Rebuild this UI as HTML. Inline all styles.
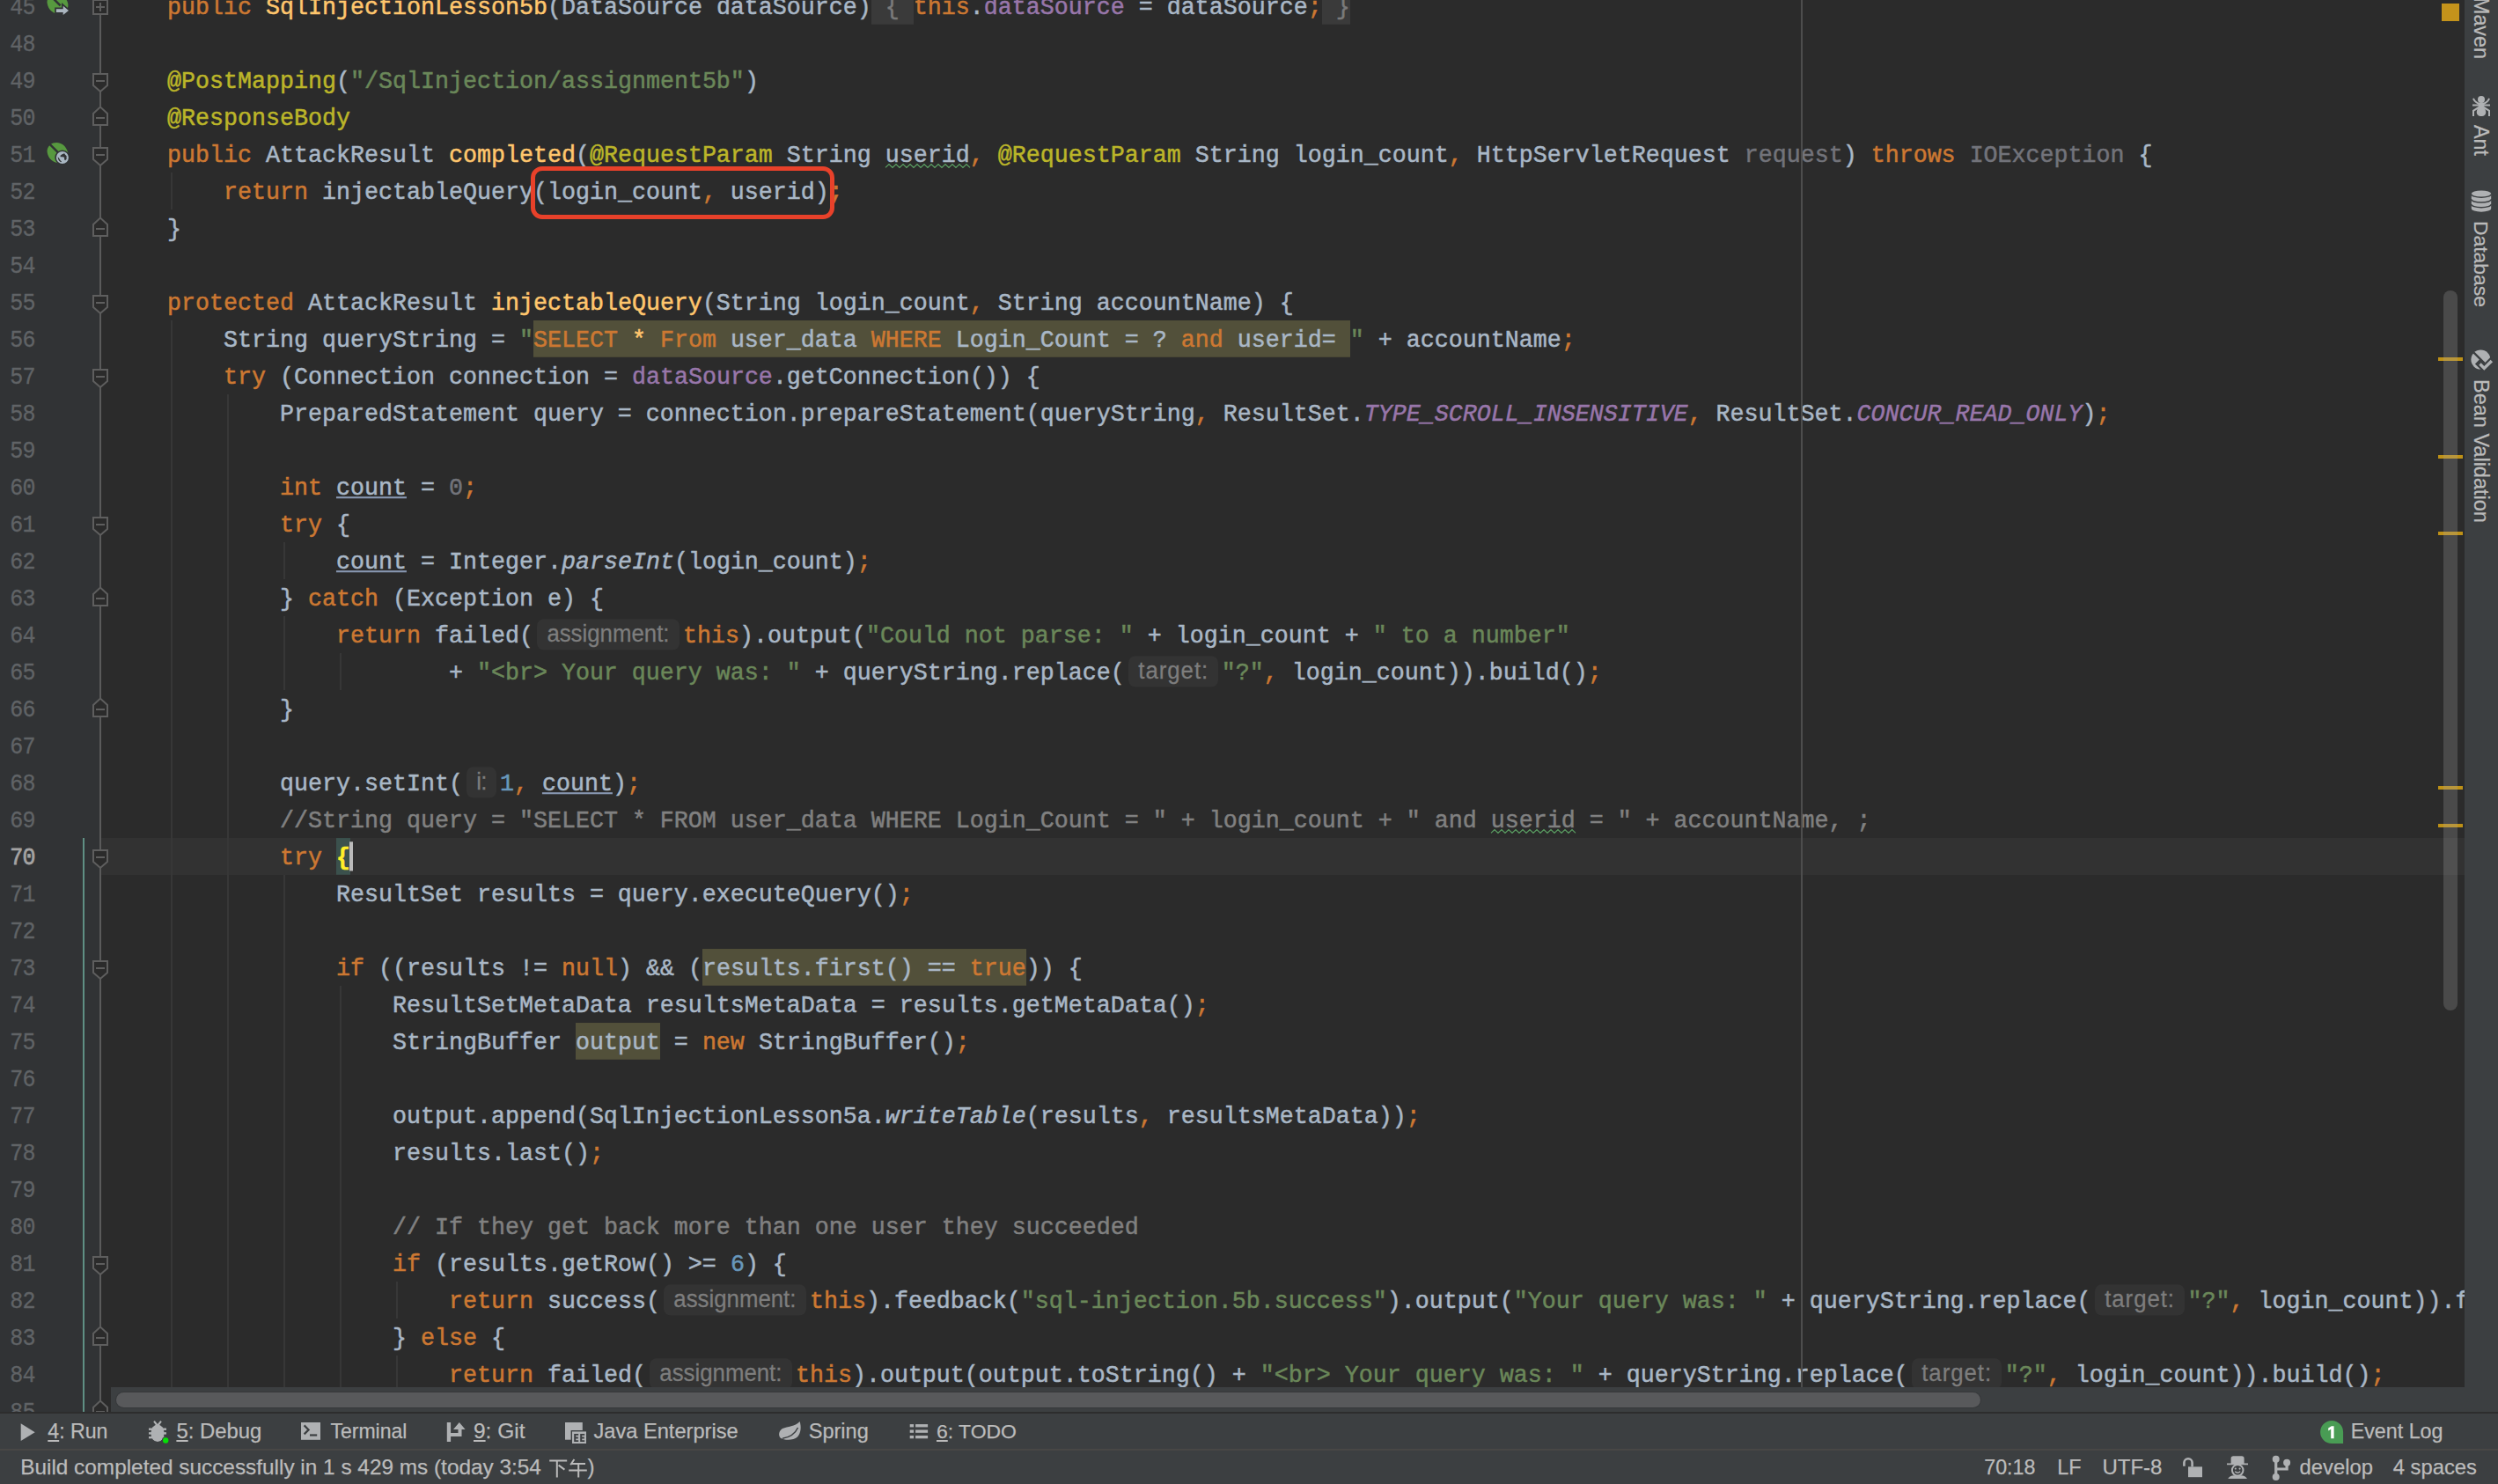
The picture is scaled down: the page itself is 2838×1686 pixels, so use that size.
<!DOCTYPE html>
<html><head><meta charset="utf-8"><title>SqlInjectionLesson5b.java</title>
<style>
*{margin:0;padding:0;box-sizing:border-box}
html,body{width:2838px;height:1686px;overflow:hidden;background:#2b2b2b}
body{position:relative;font-family:"Liberation Sans",sans-serif;color:#bbbbbb;-webkit-text-stroke:0.25px currentColor}
#ed{position:absolute;left:0;top:0;width:2800px;height:1604px;overflow:hidden;background:#2b2b2b}
#gut{position:absolute;left:0;top:0;width:113px;height:1604px;background:#313335}
.ln{position:absolute;left:0;width:40px;height:42px;line-height:42px;text-align:right;font-family:"Liberation Mono",monospace;font-size:25px;letter-spacing:-0.6px;padding-right:0;transform:scaleY(1.08);transform-origin:0 28px;color:#606366;white-space:pre}
.ln{-webkit-text-stroke:0.3px currentColor}.ln.cur{color:#a4a3a3;-webkit-text-stroke:0.7px currentColor}
.cl{position:absolute;left:126px;height:42px;line-height:42px;transform:scaleY(1.07);transform-origin:0 28px;-webkit-text-stroke:0.5px currentColor;font-family:"Liberation Mono",monospace;font-size:26.66px;color:#a9b7c6;white-space:pre}
.k{color:#cc7832}.s{color:#6a8759}.a{color:#bbb529}.m{color:#ffc66d}.f{color:#9876aa}
.c{color:#9876aa;font-style:italic}.n{color:#6897bb}.cm{color:#808080}.g{color:#72737a}.i{font-style:italic}
.u{text-decoration:underline;text-decoration-thickness:2px;text-underline-offset:1.5px;text-decoration-color:#8796b0}
.w{background:#52503a;display:inline-block;height:39.25px;vertical-align:top;margin-top:-0.04px}
.fold{background:#3a3a3a;color:#7a7a7a;display:inline-block;height:39.25px;vertical-align:top;margin-top:-0.04px}
.typo{}
.brace{color:#ffef28;background:#3b514d;font-weight:bold;display:inline-block;height:39.25px;vertical-align:top;margin-top:-0.04px}
.caret{display:inline-block;width:4px;height:31.78px;margin-top:3.70px;margin-left:-1px;margin-right:-3px;background:#bbbbbb;vertical-align:top}
.hint{display:inline-block;height:42px;vertical-align:top;position:relative;margin-top:0;-webkit-text-stroke:0.25px currentColor}
.hb{position:absolute;left:4px;right:4px;top:3.40px;height:32.4px;border-radius:8px/7.5px;background:#333333;color:#7d7d7d;font-family:"Liberation Sans",sans-serif;font-size:25.8px;line-height:31.28px;text-align:center;letter-spacing:0}
.guide{position:absolute;width:2px;background:#373737}
</style></head><body>
<div id="ed">
<div style="position:absolute;left:115px;top:952px;width:2685px;height:42px;background:#323232"></div>
<div class="guide" style="left:194px;top:196px;height:42px"></div>
<div class="guide" style="left:194px;top:364px;height:1302px"></div>
<div class="guide" style="left:258px;top:448px;height:1218px"></div>
<div class="guide" style="left:322px;top:616px;height:42px"></div>
<div class="guide" style="left:322px;top:700px;height:84px"></div>
<div class="guide" style="left:322px;top:994px;height:672px"></div>
<div class="guide" style="left:386px;top:742px;height:42px"></div>
<div class="guide" style="left:386px;top:1120px;height:546px"></div>
<div class="guide" style="left:450px;top:1456px;height:42px"></div>
<div class="guide" style="left:450px;top:1540px;height:42px"></div>
<div class="cl" style="top:-12px">    <span class="k">public </span><span class="m">SqlInjectionLesson5b</span>(DataSource dataSource)<span class="fold"> { </span><span class="k">this</span>.<span class="f">dataSource</span> = dataSource<span class="k">;</span><span class="fold"> }</span></div>
<div class="cl" style="top:72px">    <span class="a">@PostMapping</span>(<span class="s">"/SqlInjection/assignment5b"</span>)</div>
<div class="cl" style="top:114px">    <span class="a">@ResponseBody</span></div>
<div class="cl" style="top:156px">    <span class="k">public </span>AttackResult <span class="m">completed</span>(<span class="a">@RequestParam</span> String <span class="typo">userid</span><span class="k">,</span> <span class="a">@RequestParam</span> String login_count<span class="k">,</span> HttpServletRequest <span class="g">request</span>) <span class="k">throws </span><span class="g">IOException</span> {</div>
<div class="cl" style="top:198px">        <span class="k">return </span>injectableQuery(login_count<span class="k">,</span> userid)<span class="k">;</span></div>
<div class="cl" style="top:240px">    }</div>
<div class="cl" style="top:324px">    <span class="k">protected </span>AttackResult <span class="m">injectableQuery</span>(String login_count<span class="k">,</span> String accountName) {</div>
<div class="cl" style="top:366px">        String queryString = <span class="s">"</span><span class="w"><span class="k">SELECT </span><span class="m">*</span><span class="k"> From </span>user_data <span class="k">WHERE </span>Login_Count = ? <span class="k">and </span>userid= </span><span class="s">"</span> + accountName<span class="k">;</span></div>
<div class="cl" style="top:408px">        <span class="k">try </span>(Connection connection = <span class="f">dataSource</span>.getConnection()) {</div>
<div class="cl" style="top:450px">            PreparedStatement query = connection.prepareStatement(queryString<span class="k">,</span> ResultSet.<span class="c">TYPE_SCROLL_INSENSITIVE</span><span class="k">,</span> ResultSet.<span class="c">CONCUR_READ_ONLY</span>)<span class="k">;</span></div>
<div class="cl" style="top:534px">            <span class="k">int </span><span class="u">count</span> = <span class="g">0</span><span class="k">;</span></div>
<div class="cl" style="top:576px">            <span class="k">try </span>{</div>
<div class="cl" style="top:618px">                <span class="u">count</span> = Integer.<span class="i">parseInt</span>(login_count)<span class="k">;</span></div>
<div class="cl" style="top:660px">            } <span class="k">catch </span>(Exception e) {</div>
<div class="cl" style="top:702px">                <span class="k">return </span>failed(<span class="hint" style="width:170px"><span class="hb" style="">assignment:</span></span><span class="k">this</span>).output(<span class="s">"Could not parse: "</span> + login_count + <span class="s">" to a number"</span></div>
<div class="cl" style="top:744px">                        + <span class="s">"&lt;br&gt; Your query was: "</span> + queryString.replace(<span class="hint" style="width:110px"><span class="hb" style="letter-spacing:0.95px;padding-left:1px;">target:</span></span><span class="s">"?"</span><span class="k">,</span> login_count)).build()<span class="k">;</span></div>
<div class="cl" style="top:786px">            }</div>
<div class="cl" style="top:870px">            query.setInt(<span class="hint" style="width:42px"><span class="hb" style="letter-spacing:-0.8px;">i:</span></span><span class="n">1</span><span class="k">,</span> <span class="u">count</span>)<span class="k">;</span></div>
<div class="cl" style="top:912px">            <span class="cm">//String query = "SELECT * FROM user_data WHERE Login_Count = " + login_count + " and </span><span class="cm typo">userid</span><span class="cm"> = " + accountName, ;</span></div>
<div class="cl" style="top:954px">            <span class="k">try </span><span class="brace">{</span><span class="caret"></span></div>
<div class="cl" style="top:996px">                ResultSet results = query.executeQuery()<span class="k">;</span></div>
<div class="cl" style="top:1080px">                <span class="k">if </span>((results != <span class="k">null</span>) &amp;&amp; (<span class="w">results.first() == <span class="k">true</span></span>)) {</div>
<div class="cl" style="top:1122px">                    ResultSetMetaData resultsMetaData = results.getMetaData()<span class="k">;</span></div>
<div class="cl" style="top:1164px">                    StringBuffer <span class="w">output</span> = <span class="k">new </span>StringBuffer()<span class="k">;</span></div>
<div class="cl" style="top:1248px">                    output.append(SqlInjectionLesson5a.<span class="i">writeTable</span>(results<span class="k">,</span> resultsMetaData))<span class="k">;</span></div>
<div class="cl" style="top:1290px">                    results.last()<span class="k">;</span></div>
<div class="cl" style="top:1374px">                    <span class="cm">// If they get back more than one user they succeeded</span></div>
<div class="cl" style="top:1416px">                    <span class="k">if </span>(results.getRow() &gt;= <span class="n">6</span>) {</div>
<div class="cl" style="top:1458px">                        <span class="k">return </span>success(<span class="hint" style="width:170px"><span class="hb" style="">assignment:</span></span><span class="k">this</span>).feedback(<span class="s">"sql-injection.5b.success"</span>).output(<span class="s">"Your query was: "</span> + queryString.replace(<span class="hint" style="width:110px"><span class="hb" style="letter-spacing:0.95px;padding-left:1px;">target:</span></span><span class="s">"?"</span><span class="k">,</span> login_count)).feedback(</div>
<div class="cl" style="top:1500px">                    } <span class="k">else </span>{</div>
<div class="cl" style="top:1542px">                        <span class="k">return </span>failed(<span class="hint" style="width:170px"><span class="hb" style="">assignment:</span></span><span class="k">this</span>).output(output.toString() + <span class="s">"&lt;br&gt; Your query was: "</span> + queryString.replace(<span class="hint" style="width:110px"><span class="hb" style="letter-spacing:0.95px;padding-left:1px;">target:</span></span><span class="s">"?"</span><span class="k">,</span> login_count)).build()<span class="k">;</span></div>
<div style="position:absolute;left:2046px;top:0;width:2px;height:1604px;background:#4d4d4d"></div>
<svg style="position:absolute;left:0;top:0" width="2800" height="1604" viewBox="0 0 2800 1604"><polyline points="1006,190.4 1010,186.6 1014,190.4 1018,186.6 1022,190.4 1026,186.6 1030,190.4 1034,186.6 1038,190.4 1042,186.6 1046,190.4 1050,186.6 1054,190.4 1058,186.6 1062,190.4 1066,186.6 1070,190.4 1074,186.6 1078,190.4 1082,186.6 1086,190.4 1090,186.6 1094,190.4 1098,186.6 1102,190.4" fill="none" stroke="#5b9f63" stroke-width="1.25"/><polyline points="1694,946.4 1698,942.6 1702,946.4 1706,942.6 1710,946.4 1714,942.6 1718,946.4 1722,942.6 1726,946.4 1730,942.6 1734,946.4 1738,942.6 1742,946.4 1746,942.6 1750,946.4 1754,942.6 1758,946.4 1762,942.6 1766,946.4 1770,942.6 1774,946.4 1778,942.6 1782,946.4 1786,942.6 1790,946.4" fill="none" stroke="#5b9f63" stroke-width="1.25"/></svg>
<div style="position:absolute;left:603px;top:189px;width:345px;height:60px;border:5px solid #e8412a;border-radius:13px"></div>
<div id="gut"></div>
<div class="ln" style="top:-11px">45</div>
<div class="ln" style="top:31px">48</div>
<div class="ln" style="top:73px">49</div>
<div class="ln" style="top:115px">50</div>
<div class="ln" style="top:157px">51</div>
<div class="ln" style="top:199px">52</div>
<div class="ln" style="top:241px">53</div>
<div class="ln" style="top:283px">54</div>
<div class="ln" style="top:325px">55</div>
<div class="ln" style="top:367px">56</div>
<div class="ln" style="top:409px">57</div>
<div class="ln" style="top:451px">58</div>
<div class="ln" style="top:493px">59</div>
<div class="ln" style="top:535px">60</div>
<div class="ln" style="top:577px">61</div>
<div class="ln" style="top:619px">62</div>
<div class="ln" style="top:661px">63</div>
<div class="ln" style="top:703px">64</div>
<div class="ln" style="top:745px">65</div>
<div class="ln" style="top:787px">66</div>
<div class="ln" style="top:829px">67</div>
<div class="ln" style="top:871px">68</div>
<div class="ln" style="top:913px">69</div>
<div class="ln cur" style="top:955px">70</div>
<div class="ln" style="top:997px">71</div>
<div class="ln" style="top:1039px">72</div>
<div class="ln" style="top:1081px">73</div>
<div class="ln" style="top:1123px">74</div>
<div class="ln" style="top:1165px">75</div>
<div class="ln" style="top:1207px">76</div>
<div class="ln" style="top:1249px">77</div>
<div class="ln" style="top:1291px">78</div>
<div class="ln" style="top:1333px">79</div>
<div class="ln" style="top:1375px">80</div>
<div class="ln" style="top:1417px">81</div>
<div class="ln" style="top:1459px">82</div>
<div class="ln" style="top:1501px">83</div>
<div class="ln" style="top:1543px">84</div>
<div class="ln" style="top:1585px">85</div>
<svg style="position:absolute;left:0;top:0" width="130" height="1604" viewBox="0 0 130 1604"><rect x="94" y="952" width="2" height="652" fill="#5f8f83"/><rect x="113" y="0" width="2" height="1604" fill="#5a5a5a"/><rect x="106" y="0" width="16" height="16" fill="#2b2b2b" stroke="#5e5e5e" stroke-width="2"/><rect x="109" y="7" width="10" height="2" fill="#5e5e5e"/><rect x="113" y="3" width="2" height="10" fill="#5e5e5e"/><path d="M106 84 H122 V97 L114 104 L106 97 Z" fill="#2b2b2b" stroke="#5e5e5e" stroke-width="2"/><rect x="109" y="91" width="10" height="2" fill="#5e5e5e"/><path d="M106 168 H122 V181 L114 188 L106 181 Z" fill="#2b2b2b" stroke="#5e5e5e" stroke-width="2"/><rect x="109" y="175" width="10" height="2" fill="#5e5e5e"/><path d="M106 336 H122 V349 L114 356 L106 349 Z" fill="#2b2b2b" stroke="#5e5e5e" stroke-width="2"/><rect x="109" y="343" width="10" height="2" fill="#5e5e5e"/><path d="M106 420 H122 V433 L114 440 L106 433 Z" fill="#2b2b2b" stroke="#5e5e5e" stroke-width="2"/><rect x="109" y="427" width="10" height="2" fill="#5e5e5e"/><path d="M106 588 H122 V601 L114 608 L106 601 Z" fill="#2b2b2b" stroke="#5e5e5e" stroke-width="2"/><rect x="109" y="595" width="10" height="2" fill="#5e5e5e"/><path d="M106 966 H122 V979 L114 986 L106 979 Z" fill="#2b2b2b" stroke="#5e5e5e" stroke-width="2"/><rect x="109" y="973" width="10" height="2" fill="#5e5e5e"/><path d="M106 1092 H122 V1105 L114 1112 L106 1105 Z" fill="#2b2b2b" stroke="#5e5e5e" stroke-width="2"/><rect x="109" y="1099" width="10" height="2" fill="#5e5e5e"/><path d="M106 1428 H122 V1441 L114 1448 L106 1441 Z" fill="#2b2b2b" stroke="#5e5e5e" stroke-width="2"/><rect x="109" y="1435" width="10" height="2" fill="#5e5e5e"/><path d="M106 142 H122 V129 L114 121.5 L106 129 Z" fill="#2b2b2b" stroke="#5e5e5e" stroke-width="2"/><rect x="109" y="133" width="10" height="2" fill="#5e5e5e"/><path d="M106 268 H122 V255 L114 247.5 L106 255 Z" fill="#2b2b2b" stroke="#5e5e5e" stroke-width="2"/><rect x="109" y="259" width="10" height="2" fill="#5e5e5e"/><path d="M106 688 H122 V675 L114 667.5 L106 675 Z" fill="#2b2b2b" stroke="#5e5e5e" stroke-width="2"/><rect x="109" y="679" width="10" height="2" fill="#5e5e5e"/><path d="M106 814 H122 V801 L114 793.5 L106 801 Z" fill="#2b2b2b" stroke="#5e5e5e" stroke-width="2"/><rect x="109" y="805" width="10" height="2" fill="#5e5e5e"/><path d="M106 1528 H122 V1515 L114 1507.5 L106 1515 Z" fill="#2b2b2b" stroke="#5e5e5e" stroke-width="2"/><rect x="109" y="1519" width="10" height="2" fill="#5e5e5e"/><path d="M106 1612 H122 V1599 L114 1591.5 L106 1599 Z" fill="#2b2b2b" stroke="#5e5e5e" stroke-width="2"/><rect x="109" y="1603" width="10" height="2" fill="#5e5e5e"/><g transform="translate(65.6 4.4)"><path d="M-8.5 -9.5 C-2 -14 8 -12 11.5 -1 C13 5 9 10 4 12 C-4 12 -11 7 -12 -1 C-12.5 -4 -11 -7 -8.5 -9.5 Z" fill="#57993f"/><path d="M-9.5 -10.5 L3 2" stroke="#313335" stroke-width="2.6" fill="none"/><path d="M-3.4 4.2 H4.4 V-1.4 L14.9 7.6 L4.4 16.4 V14 H-3.4 Z" fill="#313335"/><path d="M-1.7 5.8 H6.1 V2.3 L12.4 7.6 L6.1 12.7 V9.6 H-1.7 Z" fill="#aab5bf"/></g><g transform="translate(65.6 173.8)"><path d="M-8.5 -9.5 C-2 -14 8 -12 11.5 -1 C13 5 9 10 4 12 C-4 12 -11 7 -12 -1 C-12.5 -4 -11 -7 -8.5 -9.5 Z" fill="#57993f"/><path d="M-9.5 -10.5 L3 2" stroke="#313335" stroke-width="2.6" fill="none"/><circle cx="5.3" cy="5.2" r="8.6" fill="#313335"/><circle cx="5.3" cy="5.2" r="7" fill="#a9b7c2"/><path d="M3 3 L5 1.5 L7.5 0.5 L8.5 2 L10 3.5 L10 7 L8.5 8.5 L7.5 7.5 L7.5 5 L5.5 4.5 L3 4.5 Z" fill="#313335"/><path d="M0 4.5 L1.5 6 L3 8.5 L4.5 10 L3.5 10.5 L1.5 9 L0.5 7 Z" fill="#313335"/></g></svg>
<div style="position:absolute;left:2774px;top:4px;width:20px;height:20px;background:#c4931b"></div>
<div style="position:absolute;left:2770px;top:406px;width:28px;height:4px;background:#be9117"></div>
<div style="position:absolute;left:2770px;top:517px;width:28px;height:4px;background:#be9117"></div>
<div style="position:absolute;left:2770px;top:604px;width:28px;height:4px;background:#be9117"></div>
<div style="position:absolute;left:2770px;top:893px;width:28px;height:4px;background:#be9117"></div>
<div style="position:absolute;left:2770px;top:936px;width:28px;height:4px;background:#be9117"></div>
<div style="position:absolute;left:2776px;top:330px;width:16px;height:818px;border-radius:8px;background:rgba(166,166,166,0.26)"></div>
<div style="position:absolute;left:126px;top:1576px;width:2674px;height:28px;background:#3c3f41"></div>
<div style="position:absolute;left:132px;top:1582px;width:2118px;height:17px;border-radius:9px;background:#58595b;box-shadow:0 0 0 1px #36383a"></div>
</div>
<div style="position:absolute;left:2800px;top:0;width:38px;height:1604px;background:#3c3f41"></div>
<div style="position:absolute;left:2804px;top:-3px;width:30px;height:70px;writing-mode:vertical-rl;font-size:23.3px;line-height:30px;color:#bbbbbb;white-space:pre;overflow:visible">Maven</div>
<div style="position:absolute;left:2804px;top:142px;width:30px;height:40px;writing-mode:vertical-rl;font-size:23.3px;line-height:30px;color:#bbbbbb;white-space:pre;overflow:visible">Ant</div>
<div style="position:absolute;left:2804px;top:251px;width:30px;height:100px;writing-mode:vertical-rl;font-size:22.9px;line-height:30px;color:#bbbbbb;white-space:pre;overflow:visible">Database</div>
<div style="position:absolute;left:2804px;top:431px;width:30px;height:170px;writing-mode:vertical-rl;font-size:23.5px;line-height:30px;color:#bbbbbb;white-space:pre;overflow:visible">Bean Validation</div>
<div style="position:absolute;left:0;top:1604px;width:2838px;height:44px;background:#3c3f41;border-top:2px solid #2d2d2d;border-bottom:2px solid #484745"></div>
<div style="position:absolute;left:0;top:1648px;width:2838px;height:38px;background:#3c3f41"></div>
<div style="position:absolute;left:54.3px;top:1606.0px;height:40px;line-height:40px;font-size:23.15px;color:#bbbbbb;white-space:pre"><span style="text-decoration:underline;text-decoration-thickness:2px;text-underline-offset:1.5px">4</span>: Run</div>
<div style="position:absolute;left:200.4px;top:1605.7px;height:40px;line-height:40px;font-size:23.88px;color:#bbbbbb;white-space:pre"><span style="text-decoration:underline;text-decoration-thickness:2px;text-underline-offset:1.5px">5</span>: Debug</div>
<div style="position:absolute;left:375.4px;top:1606.0px;height:40px;line-height:40px;font-size:23.05px;color:#bbbbbb;white-space:pre">Terminal</div>
<div style="position:absolute;left:538.0px;top:1605.5px;height:40px;line-height:40px;font-size:24.48px;color:#bbbbbb;white-space:pre"><span style="text-decoration:underline;text-decoration-thickness:2px;text-underline-offset:1.5px">9</span>: Git</div>
<div style="position:absolute;left:674.5px;top:1605.8px;height:40px;line-height:40px;font-size:23.63px;color:#bbbbbb;white-space:pre">Java Enterprise</div>
<div style="position:absolute;left:918.7px;top:1605.8px;height:40px;line-height:40px;font-size:23.56px;color:#bbbbbb;white-space:pre">Spring</div>
<div style="position:absolute;left:1064.0px;top:1606.0px;height:40px;line-height:40px;font-size:22.95px;color:#bbbbbb;white-space:pre"><span style="text-decoration:underline;text-decoration-thickness:2px;text-underline-offset:1.5px">6</span>: TODO</div>
<div style="position:absolute;left:2670.7px;top:1605.9px;height:40px;line-height:40px;font-size:23.27px;color:#bbbbbb;white-space:pre">Event Log</div>
<div style="position:absolute;left:23.2px;top:1646.9px;height:40px;line-height:40px;font-size:24.36px;color:#bbbbbb;white-space:pre">Build completed successfully in 1 s 429 ms (today 3:54</div>
<div style="position:absolute;left:667.4px;top:1646.9px;height:40px;line-height:40px;font-size:24.2px;color:#bbbbbb;white-space:pre">)</div>
<div style="position:absolute;left:2254.3px;top:1647.3px;height:40px;line-height:40px;font-size:23.22px;color:#bbbbbb;white-space:pre">70:18</div>
<div style="position:absolute;left:2337.2px;top:1647.2px;height:40px;line-height:40px;font-size:23.48px;color:#bbbbbb;white-space:pre">LF</div>
<div style="position:absolute;left:2388.4px;top:1647.0px;height:40px;line-height:40px;font-size:24.04px;color:#bbbbbb;white-space:pre">UTF-8</div>
<div style="position:absolute;left:2612.6px;top:1647.1px;height:40px;line-height:40px;font-size:23.78px;color:#bbbbbb;white-space:pre">develop</div>
<div style="position:absolute;left:2718.7px;top:1647.0px;height:40px;line-height:40px;font-size:23.81px;color:#bbbbbb;white-space:pre">4 spaces</div>
<svg style="position:absolute;left:0;top:0;pointer-events:none" width="2838" height="1686" viewBox="0 0 2838 1686"><path d="M23.7 1617.3 L39.7 1627.2 L23.7 1637.1 Z" fill="#afb1b3"/><g fill="#afb1b3" stroke="none"><ellipse cx="179" cy="1628.2" rx="7.6" ry="9.8"/><path d="M174.2 1615.3 l1.6 -1.2 l3.2 4 l3.2 -4 l1.6 1.2 l-3.4 4.6 h-2.8 Z"/><rect x="169" y="1622.5" width="20" height="2.4"/><rect x="169" y="1627.2" width="20" height="2.4"/><rect x="169" y="1632" width="20" height="2.4"/></g><circle cx="188.2" cy="1636.5" r="4.4" fill="#3c3f41"/><circle cx="188.2" cy="1636.5" r="3.2" fill="#05e005"/><rect x="342" y="1616" width="22" height="19.8" fill="#afb1b3"/><path d="M345.6 1619.4 L350.6 1624.4 L345.6 1629.4" fill="none" stroke="#3c3f41" stroke-width="2.2"/><rect x="352" y="1629.4" width="8.2" height="2.2" fill="#3c3f41"/><path d="M507.8 1616 h4.3 v12 h8.4 v-4 h-5.5 l6.8 -8 l6.8 8 h-4.1 v8 h-12.4 v6 h-4.3 Z" fill="#afb1b3"/><rect x="642" y="1616" width="19.8" height="19.7" fill="#afb1b3"/><rect x="648.6" y="1625" width="19" height="16.4" fill="#3c3f41"/><rect x="650" y="1626.4" width="16" height="13.6" fill="#afb1b3"/><path d="M652.2 1629 h5 v1.8 h-3 v1.8 h2.6 v1.8 h-2.6 v1.8 h3 v1.8 h-5 Z" fill="#3c3f41"/><path d="M659.2 1629 h5 v1.8 h-3 v1.8 h2.6 v1.8 h-2.6 v1.8 h3 v1.8 h-5 Z" fill="#3c3f41"/><path d="M908.6 1615 C910.5 1621 910 1628 906 1632.5 C901 1637 891 1636.5 886.5 1633.5 C884 1630 885 1625.5 889 1623 C895 1620.5 903 1621 908.6 1615 Z" fill="#afb1b3"/><path d="M889 1634.3 C897 1633 903.5 1628.5 906.5 1622" fill="none" stroke="#3c3f41" stroke-width="1.5"/><rect x="1033.7" y="1618.1" width="4.4" height="3.3" fill="#afb1b3"/><rect x="1040.1" y="1618.1" width="14" height="3.3" fill="#afb1b3"/><rect x="1033.7" y="1624.5" width="4.4" height="3.3" fill="#afb1b3"/><rect x="1040.1" y="1624.5" width="14" height="3.3" fill="#afb1b3"/><rect x="1033.7" y="1631" width="4.4" height="3.3" fill="#afb1b3"/><rect x="1040.1" y="1631" width="14" height="3.3" fill="#afb1b3"/><path d="M2649.1 1614 a13 13 0 0 1 13 13 v13 h-13 a13 13 0 0 1 0 -26 Z" fill="#499c54"/><path d="M2645.2 1622.6 l3.6 -2.4 h2.8 v14 h-3.4 v-10.4 l-3 1.6 Z" fill="#ffffff"/><rect x="2486" y="1666.4" width="16" height="11.8" fill="#afb1b3"/><path d="M2481.4 1665.8 v-4 a4.6 4.6 0 0 1 9.2 0 v4.6" fill="none" stroke="#afb1b3" stroke-width="2.6"/><g fill="#afb1b3"><path d="M2534.6 1662.4 v-5.4 q0 -2.8 2.8 -2.8 h9.4 q2.8 0 2.8 2.8 v5.4 h4.4 v1.8 h-24 v-1.8 Z"/><path d="M2531.2 1680 q2 -3.6 7 -3.8 h7.8 q5 0.2 7 3.8 Z"/></g><circle cx="2542.2" cy="1670.3" r="6.3" fill="none" stroke="#afb1b3" stroke-width="2"/><circle cx="2539.8" cy="1668.6" r="1.1" fill="#afb1b3"/><circle cx="2544.6" cy="1668.6" r="1.1" fill="#afb1b3"/><path d="M2539.2 1671.8 q3 2.8 6 0" fill="none" stroke="#afb1b3" stroke-width="1.4"/><g fill="#afb1b3"><circle cx="2585.7" cy="1657.8" r="4"/><circle cx="2598.1" cy="1661.8" r="4"/><circle cx="2585.7" cy="1678" r="4"/></g><path d="M2585.7 1657.8 V1678 M2598.1 1661.8 V1669 H2585.7" fill="none" stroke="#afb1b3" stroke-width="3.2"/><g fill="none" stroke="#bbbbbb" stroke-width="2"><path d="M624.2 1659.6 H644.2 M632.8 1659.6 V1678.6 M634.6 1664.6 L641.4 1669.6"/><path d="M652.4 1658 L648.2 1664.2 M649.8 1663 H665 M646.2 1670.4 H666.8 M657.2 1663 V1678.6"/></g><g fill="#afb1b3" stroke="none"><circle cx="2819" cy="112.9" r="4"/><circle cx="2819" cy="119.4" r="3.1"/><path d="M2819 121 C2822.5 121.5 2824.2 124.5 2824.2 127.5 C2824.2 130.3 2822 132.1 2819 132.1 C2816 132.1 2813.8 130.3 2813.8 127.5 C2813.8 124.5 2815.5 121.5 2819 121 Z"/></g><path d="M2817 117.8 Q2812.2 116.8 2809.9 111.9 M2821 117.8 Q2825.8 116.8 2828.1 111.9 M2809 119.5 H2829 M2817 121.4 L2810 125.8 V132.1 M2821 121.4 L2828 125.8 V132.1" fill="none" stroke="#afb1b3" stroke-width="2"/><g transform="translate(2819 228.7)"><path d="M-11.2 -8.7 a11.2 3.6 0 0 1 22.4 0 v17 a11.2 3.7 0 0 1 -22.4 0 Z" fill="#afb1b3"/><path d="M-11.4 -8.2 a11.4 3.7 0 0 0 22.8 0" fill="none" stroke="#3c3f41" stroke-width="1.5"/><path d="M-11.4 -2.4 a11.4 3.7 0 0 0 22.8 0" fill="none" stroke="#3c3f41" stroke-width="1.5"/><path d="M-11.4 3.3 a11.4 3.7 0 0 0 22.8 0" fill="none" stroke="#3c3f41" stroke-width="1.5"/></g><circle cx="2818.4" cy="408.6" r="11" fill="#afb1b3"/><path d="M2810.3 400.4 L2822.8 412.9" stroke="#3c3f41" stroke-width="2.3" fill="none"/><path d="M2817.3 413.4 L2822.3 418.4 L2831 409.7" fill="none" stroke="#3c3f41" stroke-width="7.6" stroke-linecap="square"/><path d="M2817.5 413.6 L2822.3 418.4 L2830.8 409.9" fill="none" stroke="#afb1b3" stroke-width="3.5"/></svg>
</body></html>
